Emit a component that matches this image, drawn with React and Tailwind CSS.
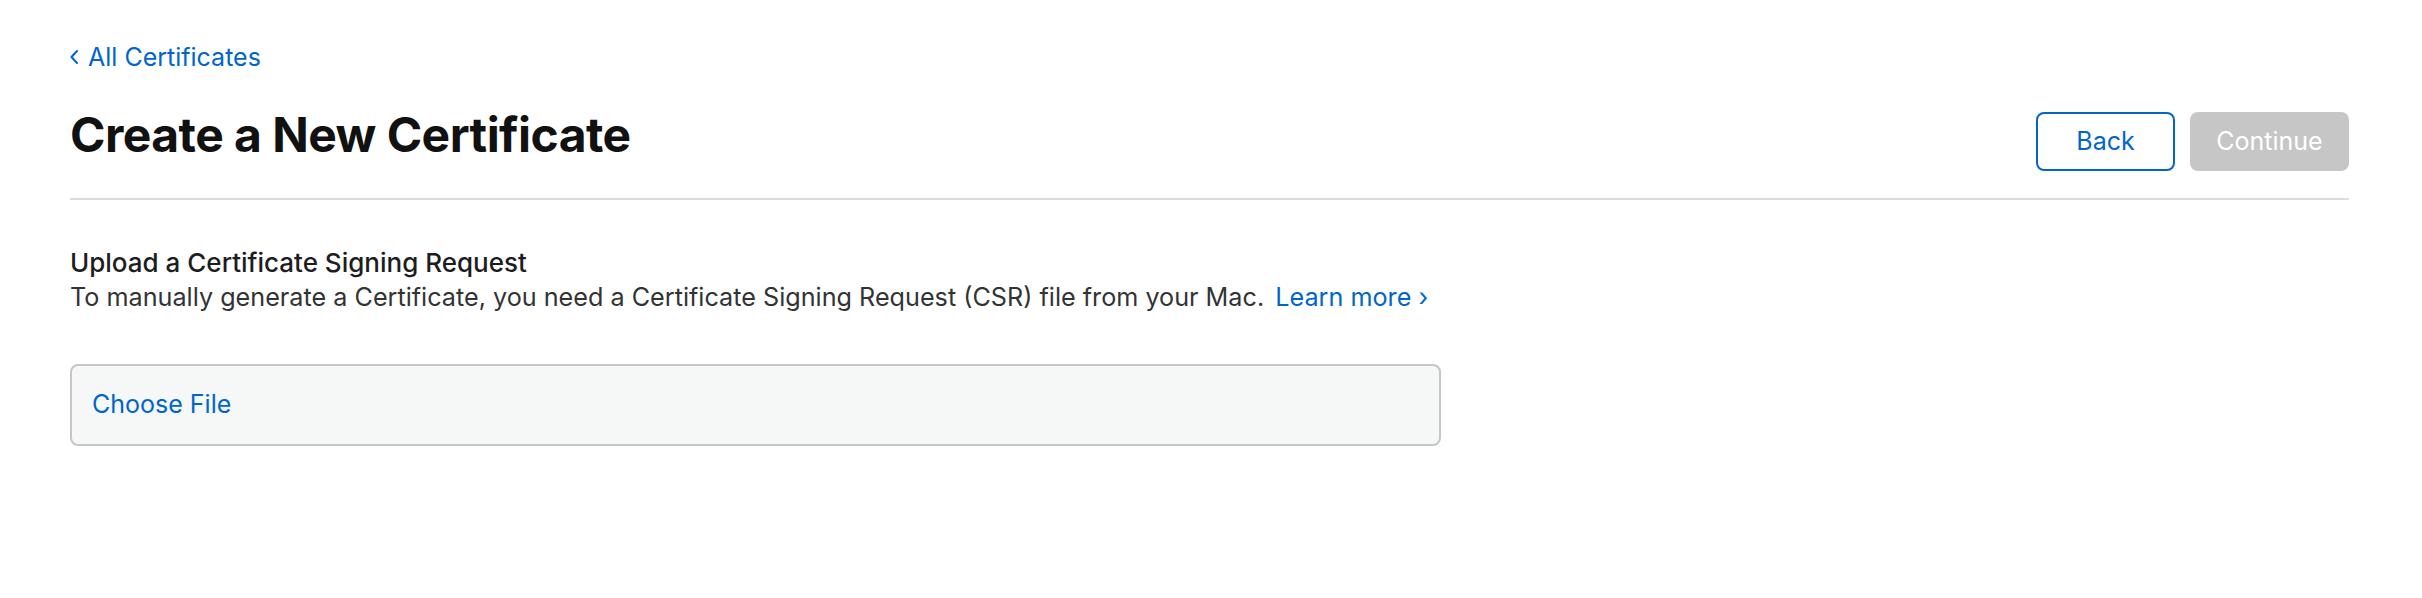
export default function App() {
  const font = { fontFamily: "Inter, 'Noto Sans', sans-serif" };

  return (
    <div className="min-h-screen bg-white" style={font}>
      <div className="ml-[70px] w-[2279px] pt-[40px]">
        {/* back link */}
        <a href="#" className="flex items-center gap-[10px] text-[25px] leading-[34px] text-[#0066cc]">
          <svg width="8" height="14" viewBox="0 0 8 14" fill="none">
            <path d="M7 1L1.5 7L7 13" stroke="#0066cc" strokeWidth="2" strokeLinecap="round" strokeLinejoin="round" />
          </svg>
          <span>All Certificates</span>
        </a>

        {/* header */}
        <div className="mt-[32px] flex items-start justify-between">
          <h1 className="text-[48px] font-bold leading-[58px] text-[#111111] tracking-[-0.55px]">
            Create a New Certificate
          </h1>
          <div className="mt-[6px] flex gap-[15px]">
            <button className="h-[59px] w-[139px] rounded-[8px] border-2 border-[#0066cc] bg-white text-[25px] text-[#0066cc]">
              Back
            </button>
            <button disabled className="h-[59px] w-[159px] rounded-[8px] bg-[#c6c6c6] text-[25px] text-white">
              Continue
            </button>
          </div>
        </div>

        <div className="mt-[27px] h-[2px] bg-[#dcdcdc]" />

        {/* upload section */}
        <div className="mt-[45px] leading-[35px] text-[#1d1d1f]">
          <p className="text-[26px] font-medium">Upload a Certificate Signing Request</p>
          <p className="text-[25.2px] text-[#333336]">
            To manually generate a Certificate, you need a Certificate Signing Request (CSR) file from your Mac.{" "}
            <a href="#" className="ml-[4px] text-[#0066cc]">
              Learn more ›
            </a>
          </p>
        </div>

        <label className="mt-[49px] flex h-[82px] w-[1371px] cursor-pointer items-center rounded-[8px] border-2 border-[#c6c6c6] bg-[#f6f8f8] pl-[20px] text-[25px] text-[#0066cc]">
          Choose File
          <input type="file" className="hidden" />
        </label>
      </div>
    </div>
  );
}
